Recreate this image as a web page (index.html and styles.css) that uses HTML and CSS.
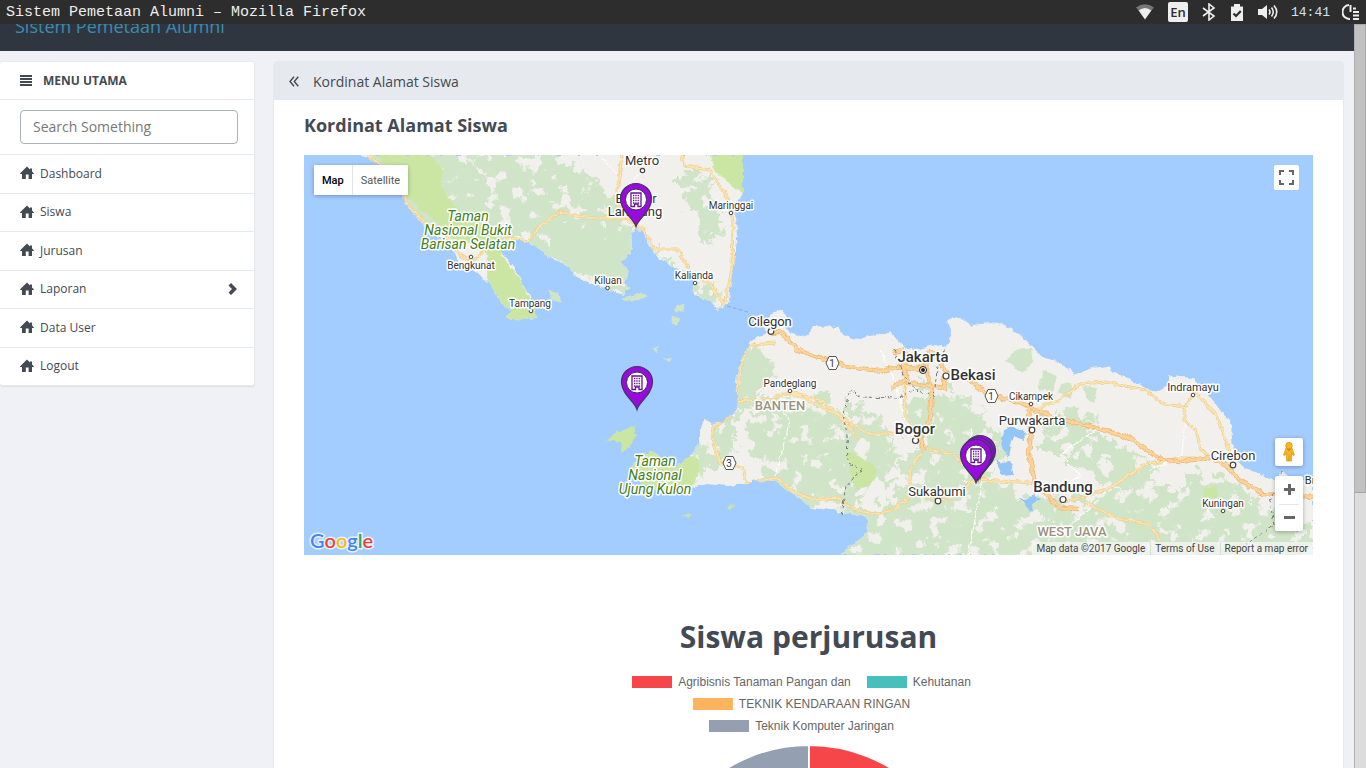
FILE: index.html
```html
<!DOCTYPE html>
<html lang="id">
<head>
<meta charset="utf-8">
<title>Sistem Pemetaan Alumni</title>
<link rel="stylesheet" href="styles.css">
</head>
<body>
<svg class="defs" width="0" height="0" aria-hidden="true">
  <symbol id="home" viewBox="0 0 14 14"><path d="M7 .5 10 3.500V2.500H12V5.500L13.800 7.300V8H12V13H8.600V8.500H5.800V13H2V8H.2V7.300z"/></symbol>
</svg>
<div class="screen">
  <header class="osbar">
    <span class="window-title">Sistem Pemetaan Alumni – Mozilla Firefox</span>
    <div class="tray">
      <div class="indicators">
        <svg width="18" height="16" viewBox="0 0 18 16"><path d="M0 3.500Q9-3 18 3.500L15 7Q9 3 3 7z" fill="#777"/><path d="M2.600 6.500Q9 1.500 15.400 6.500L9 15.500z" fill="#eee"/></svg>
        <span class="lang">En</span>
        <svg width="14" height="18" viewBox="0 0 14 18" fill="none" stroke="#eee" stroke-width="1.600"><path d="M1 5 12 13 7 17V1L12 5 1 13"/></svg>
        <svg width="14" height="17" viewBox="0 0 14 17"><path d="M1 2.500H4V0H10V2.500H13V17H1z" fill="#eee"/><path d="M3.500 9.500 6 12 10.800 7" fill="none" stroke="#2d2d2d" stroke-width="2.200"/></svg>
        <svg width="21" height="16" viewBox="0 0 21 16" fill="none" stroke="#eee" stroke-width="1.600"><path d="M0 5H4L9 1V15L4 11H0z" fill="#eee" stroke="none"/><path d="M11 5.500Q13 8 11 10.500M13.500 3.500Q17 8 13.500 12.500M16 1.500Q21.500 8 16 14.500"/></svg>
      </div>
      <span class="clock">14:41</span>
      <svg width="18" height="16" viewBox="0 0 18 16" fill="none" stroke="#eee" stroke-width="2"><path d="M7 1A7 7 0 0 0 8 15M8.500 1V8M11 4.500H14M11 8H17M11 11.500H17M11 15H17"/></svg>
    </div>
  </header>
  <div class="browser">
    <div class="page">
      <nav class="navbar"><a class="brand" href="#">Sistem Pemetaan Alumni</a></nav>
      <div class="columns">
        <aside class="sidebar">
          <h2 class="menu-title"><svg width="12" height="12" viewBox="0 0 12 12"><path d="M0 0H12V2H0zM0 3H12V5H0zM0 6H12V8H0zM0 9H12V11H0z"/></svg>MENU UTAMA</h2>
          <form class="search"><input type="text" aria-label="Search Something" placeholder="Search Something"></form>
          <ul class="menu">
            <li><a href="#"><svg class="icon"><use href="#home"/></svg>Dashboard</a></li>
            <li><a href="#"><svg class="icon"><use href="#home"/></svg>Siswa</a></li>
            <li><a href="#"><svg class="icon"><use href="#home"/></svg>Jurusan</a></li>
            <li><a href="#"><svg class="icon"><use href="#home"/></svg>Laporan<svg class="caret" viewBox="0 0 9 12"><path d="M3 0 9 6 3 12 .500 9.500 4 6 .500 2.500z"/></svg></a></li>
            <li><a href="#"><svg class="icon"><use href="#home"/></svg>Data User</a></li>
            <li><a href="#"><svg class="icon"><use href="#home"/></svg>Logout</a></li>
          </ul>
        </aside>
        <main class="panel">
          <div class="panel-head">
            <svg width="10" height="11" viewBox="0 0 10 11" fill="none" stroke="#434a54" stroke-width="1.400"><path d="M5 .8 1 5.500 5 10.200M9.300 .8 5.300 5.500 9.300 10.200"/></svg>
            <span>Kordinat Alamat Siswa</span>
          </div>
          <div class="panel-body">
            <h4 class="map-title">Kordinat Alamat Siswa</h4>
            <div class="map">
              <svg class="map-canvas" viewBox="304 155 1009 400" preserveAspectRatio="xMidYMid slice">
                <defs>
                  <filter id="veg" filterUnits="userSpaceOnUse" x="304" y="155" width="1009" height="400">
                    <feTurbulence type="fractalNoise" baseFrequency=".07" numOctaves="5" seed="7" result="n"/>
                    <feColorMatrix in="n" values="0 0 0 0 0 0 0 0 0 0 0 0 0 0 0 16 0 0 0 -5.700" result="holes"/>
                    <feDisplacementMap in="SourceGraphic" in2="n" scale="34" xChannelSelector="R" yChannelSelector="G" result="d"/>
                    <feComposite in="d" in2="holes" operator="in"/>
                  </filter>
                  <filter id="rough" filterUnits="userSpaceOnUse" x="304" y="155" width="1009" height="400">
                    <feTurbulence type="fractalNoise" baseFrequency=".16" numOctaves="3" seed="3"/>
                    <feDisplacementMap in="SourceGraphic" scale="5" xChannelSelector="R" yChannelSelector="G"/>
                  </filter>
                  <clipPath id="land"><path d="M360 155 376 163 390 178 400 190 406 204 420 222 433 234 448 243 460 262 472 268 482 278 490 284 498 297 505 307 511 311 506 317 511 320 537 318 530 297 522 283 513 266 500 250 500 242 520 240 534 245 548 256 560 262 571 268 575 276 590 283 610 290 623 295 630 289 624 283 628 270 619 262 629 254 633 248 631 235 636 230 643 231 648 243 658 257 668 264 681 271 693 281 694 296 712 301 718 311 724 306 729 302 730 290 734 260 737 240 736 212 738 200 743 193V155zM747 350 749 343 757 337 768 333 763 325 772 313 780 310 786 314 788 322 785 326 790 333 800 336 808 335 813 326 838 327 842 335 860 340 867 336 880 335 890 331 897 340 905 347 915 350 935 345 945 348 950 342 951 330 948 321 953 317 960 318 972 325 990 323 1005 325 1018 333 1030 345 1042 358 1058 362 1065 366 1075 375 1092 368 1108 366 1114 372 1130 379 1145 388 1157 391 1170 384 1168 375 1180 377 1193 378 1205 390 1215 403 1225 417 1231 420 1232 440 1236 460 1247 470 1256 472 1274 480 1283 470 1291 480 1313 480V555H841L850 545 860 541 868 530 867 516 850 513 843 514 832 510 812 508 800 498 785 489 775 481 752 480 747 484 728 486 706 484 695 487 670 492 650 488 638 480 631 468 641 455 653 452 665 463 677 467 690 456 700 442 700 427 706 419 711 425 722 422 734 414 738 402 736 382 738 369 743 356z"/></clipPath>
                  <symbol id="pin" viewBox="-18 -46 36 48" overflow="visible">
                    <path d="M0-.5C-2-8-15.500-16-15.500-28A15.500 15.500 0 0 1 15.500-28C15.500-16 2-8 0-.5z" fill="#980bdc" stroke="#41365e" stroke-width="1.200"/>
                    <circle cy="-27.500" r="10.500" fill="#fff" stroke="#3c2d60"/>
                    <path d="M-5-34H5V-20.500H2V-23H-1.500V-20.500H-5z" fill="#fff" stroke="#631391" stroke-width="1.300"/>
                    <path d="M-3-31.500H4M-3-29H4M-3-26.500H4M-3-24H4" stroke="#631391" stroke-width="1.300" stroke-dasharray="1.300 1"/>
                  </symbol>
                </defs>
                <rect x="304" y="155" width="1009" height="400" fill="#a3ccff"/>
                <g filter="url(#rough)">
                <g clip-path="url(#land)">
                  <rect x="304" y="155" width="1009" height="400" fill="#f2f0ed"/>
                  <g fill="#d0e4c8" filter="url(#veg)">
                    <path d="M355 150H560L618 200 636 228 640 300 560 270 528 240 500 245 420 230 405 200zM680 172H712V200L725 230 705 245 695 220 680 190zM560 200 625 210 636 250 632 300 550 260zM650 243 675 262 700 290 690 292zM692 286 715 284 726 305 695 300z"/>
                    <path d="M740 345 765 352 775 375 755 400 710 450 690 490 620 490 640 455 690 455 735 410zM765 395 800 405 830 395 850 430 875 470 850 515 790 495 760 470 745 440zM715 420 735 425 735 450 715 470 690 480zM845 400 880 415 900 455 890 490 860 470zM920 380 960 390 990 420 1010 450 990 480 940 470 925 440 900 430zM905 450 960 450 970 490 930 510 900 490zM840 515 900 495 980 480 1060 500 1120 490 1190 485 1260 500 1313 530V560H830zM1040 410 1075 425 1120 440 1160 465 1150 490 1105 485 1080 460 1045 450zM1190 470 1230 480 1260 500 1230 510 1190 490zM1050 405 1100 415 1080 435z"/>
                  </g>
                  <g fill="#d0e4c8"><path d="M739 360 756 345 767 360 763 382 747 391 738 378zM1005 361 1020 348 1031 348 1034 362 1022 373zM1044 370 1057 376 1052 393 1038 389zM1061 384 1072 382 1071 398 1058 392zM1083 386 1097 388 1094 404 1087 398zM550 225 570 222 600 240 630 240 628 280 605 282 550 256z"/></g>
                  <g fill="#cbe6a3"><path d="M374 155H430L443 170 442 187 458 210 500 235 502 255 522 283 530 300 542 320H505L500 299 487 280 488 256 475 244 452 240 438 222 422 211 402 192 400 176zM711 155H744V195L714 171zM620 450H660L676 466 686 455 698 458 699 472 690 490H630zM846 450 875 465 877 478 868 486 856 489 851 475zM1203 488 1216 486 1218 498 1204 498z"/></g>
                  <g fill="#93c5f8"><path d="M1004 430 1012 427 1024 430 1025 440 1014 437 1010 446 1008 457 1001 445zM996 460 1004 464 1010 460 1014 475 1002 476zM1018 499 1026 500 1033 493 1040 500 1032 504 1033 514 1026 504z"/></g>
                  <g fill="none" stroke="#fff" stroke-width="1"><path d="M770 395 790 420 782 450 775 480M970 430 982 480 975 520 968 555M1095 430 1060 455 1080 475 1060 490M1185 420 1182 455 1150 470M880 350 895 380 905 420M600 155 622 180M650 166 632 180M1100 500 1070 525"/></g>
                  <g fill="none" stroke="#f0cf8b" stroke-width="3"><path id="minor" d="M365 153 382 167 404 190 407 204 422 220 446 236 459 254 472 263M472 263 482 252 510 238 528 241 540 226 560 212 590 218 625 218 643 230 655 249 678 249 692 274 711 285 724 305 732 270 733 220 726 195 709 170 684 166 682 155M622 155 616 200 627 218M747 350 740 369 737 390 738 402 730 417 712 427 715 447 720 463 742 466 747 483 777 478 793 492 815 500 838 498 855 510 878 515 897 507 912 495 947 500 976 480 1020 482 1045 485M738 401 770 399 791 392 820 400 839 415 860 440M790 392 832 412 870 435 896 433M904 365 905 415 917 438 930 450 952 453 970 470 986 478M922 451 910 470 910 495M737 350 752 345 776 343M1038 408 1059 400 1080 384 1105 382 1145 390 1164 404 1185 407 1195 392M1184 407 1184 420 1196 430 1201 450 1214 460M1195 392 1216 415 1232 458M1065 502 1106 490 1145 465 1180 458 1195 458M1085 503 1120 519 1150 525 1160 540"/></g>
                  <g fill="none" stroke="#fae5b4" stroke-width="1.500"><use href="#minor"/></g>
                  <g fill="none" stroke="#eebc76" stroke-width="4.500"><path id="major" d="M771 334 780 331 798 350 818 357 850 367 880 371 902 367 920 369 930 352 938 356 945 372 970 381 990 395 1020 402 1035 410 1060 419 1100 429 1130 438 1158 458 1180 462 1210 457 1225 465 1240 480 1263 494 1313 497M893 352 903 350 908 358 902 367 909 383 944 388 945 372M891 388 908 378M928 352 927 372 932 390 930 420 920 440 924 451M1029 410 1031 430 1029 455 1035 483 1047 494 1060 508 1080 509"/></g>
                  <g fill="none" stroke="#fcd39c" stroke-width="2.700"><use href="#major"/></g>
                  <g fill="none" stroke="#777" stroke-width="1" stroke-dasharray="3 3"><path d="M845 500 842 515M841 514 846 487 857 474 864 470 848 463 847 435 843 414 848 397 850 389 860 397 898 398 915 389 934 397 937 370 946 345M894 349 903 375 918 392"/><path d="M1284 465 1278 485 1270 501 1274 525 1245 545"/></g>
                </g>
                <g fill="#cbe6a3"><path d="M606 440 617 432 634 427 636 435 630 448 622 453 620 443zM682 515 692 513 689 517zM726 507 735 504 730 510z"/><g fill="#d0e4c8"><path d="M548 288 560 295 561 303 552 300zM620 299 638 293 648 295 640 300 626 301zM676 305 686 304 683 311 675 313zM672 317 680 318 678 325 671 324zM652 349 659 346 656 352zM663 358 671 357 669 362z"/></g></g>
                </g>
                <path d="M727 306 748 312" stroke="#8ba9db" stroke-dasharray="4 2"/>
                <g fill="#fff" stroke="#444" stroke-width="1.200"><circle cx="771" cy="331.500" r="2.800"/><circle cx="946" cy="376" r="3"/><circle cx="915.500" cy="440.500" r="3"/><circle cx="938" cy="501" r="2.800"/><circle cx="1063" cy="499.500" r="3"/><circle cx="1032" cy="430" r="2.800"/><circle cx="1233" cy="465" r="2.800"/><circle cx="642.500" cy="170.500" r="2.200"/><g stroke-width="1"><circle cx="471" cy="257" r="1.800"/><circle cx="531" cy="311" r="1.800"/><circle cx="607.500" cy="288" r="1.800"/><circle cx="695" cy="283" r="1.800"/><circle cx="731" cy="213" r="1.800"/><circle cx="790" cy="391" r="1.800"/><circle cx="1031" cy="404" r="1.800"/><circle cx="1193" cy="395" r="1.800"/><circle cx="1223" cy="511" r="1.800"/></g></g>
                <circle cx="923" cy="370" r="3.500" fill="#fff" stroke="#222"/><circle cx="923" cy="370" r="2" fill="#222"/>
                <g class="shield"><path d="M826 363 829 356.500H836L839 363 836 369.500H829z"/><path d="M985 396 988 389.500H995L998 396 995 402.500H988z"/><path d="M723 463 726 456.500H733L736 463 733 469.500H726z"/></g>
                <g class="place tiny"><text x="832" y="367">1</text><text x="991" y="400">1</text><text x="729" y="467">3</text></g>
                <g class="place park"><text x="468" y="221">Taman</text><text x="468" y="235">Nasional Bukit</text><text x="468" y="249">Barisan Selatan</text><text x="655" y="466">Taman</text><text x="655" y="480">Nasional</text><text x="655" y="494">Ujung Kulon</text></g>
                <g class="place tiny"><text x="471" y="269">Bengkunat</text><text x="530" y="307">Tampang</text><text x="608" y="284">Kiluan</text><text x="694" y="279">Kalianda</text><text x="731" y="209">Maringgai</text><text x="790" y="387">Pandeglang</text><text x="1031" y="400">Cikampek</text><text x="1223" y="507">Kuningan</text></g>
                <g class="place village"><text x="1193" y="391">Indramayu</text><text x="1313" y="484">Bre</text></g>
                <g class="place town"><text x="642" y="165">Metro</text><text x="636" y="203">Bandar</text><text x="635" y="216">Lampung</text><text x="770" y="326">Cilegon</text><text x="1032" y="425">Purwakarta</text><text x="937" y="496">Sukabumi</text><text x="1233" y="460">Cirebon</text></g>
                <g class="place city"><text x="923" y="362">Jakarta</text><text x="973" y="380">Bekasi</text><text x="915" y="434">Bogor</text><text x="1063" y="492">Bandung</text></g>
                <g class="place region"><text x="780" y="410">BANTEN</text><text x="1072" y="536">WEST JAVA</text></g>
                <use href="#pin" x="618" y="181" width="36" height="48"/>
                <use href="#pin" x="619" y="364" width="36" height="48"/>
                <use href="#pin" x="962" y="433" width="36" height="48"/>
                <use href="#pin" x="960" y="435" width="36" height="48"/>
                <use href="#pin" x="958" y="437" width="36" height="48"/>
                <text class="google" x="310" y="548"><tspan fill="#4285f4">G</tspan><tspan fill="#ea4335">o</tspan><tspan fill="#fbbc05">o</tspan><tspan fill="#4285f4">g</tspan><tspan fill="#34a853">l</tspan><tspan fill="#ea4335">e</tspan></text>
              </svg>
              <div class="map-types"><button class="active" type="button">Map</button><button type="button">Satellite</button></div>
              <button class="fullscreen" type="button" aria-label="Fullscreen"><svg width="15" height="15" viewBox="0 0 15 15" fill="none" stroke="#666" stroke-width="2"><path d="M1 5V1H5M10 1H14V5M14 10V14H10M5 14H1V10"/></svg></button>
              <div class="map-tools">
                <button class="pegman" type="button" aria-label="Street View"><svg width="14" height="20" viewBox="0 0 14 20" fill="#fbb51c" stroke="#c98b12" stroke-width=".6"><path d="M4 6H10L12.500 13 11 13.500 9.500 10.500V19H4.500V10.500L3 13.500 1.500 13z"/><circle cx="7" cy="3.600" r="3.300"/><path d="M5 7 7 9 9 7" fill="#e77b16"/><path d="M7 13V19"/></svg></button>
                <div class="zoom"><button type="button" aria-label="Zoom in"><svg width="11" height="11" viewBox="0 0 11 11"><path d="M4 0H7V4H11V7H7V11H4V7H0V4H4z"/></svg></button><button type="button" aria-label="Zoom out"><svg width="11" height="3" viewBox="0 0 11 3"><path d="M0 0H11V3H0z"/></svg></button></div>
              </div>
              <div class="credits"><span>Map data ©2017 Google</span><a href="#">Terms of Use</a><a href="#">Report a map error</a></div>
            </div>
            <section class="chart">
              <h1>Siswa perjurusan</h1>
              <ul class="legend">
                <li><i class="red"></i>Agribisnis Tanaman Pangan dan</li>
                <li><i class="teal"></i>Kehutanan</li>
                <li><i class="orange"></i>TEKNIK KENDARAAN RINGAN</li>
                <li><i class="gray"></i>Teknik Komputer Jaringan</li>
              </ul>
              <svg class="pie" width="314" height="314" viewBox="0 0 314 314" stroke="#fff" stroke-width="2"><path d="M157 0A157 157 0 0 1 157 314z" fill="#f7464a"/><path d="M157 0A157 157 0 0 0 157 314z" fill="#949fb1"/></svg>
            </section>
          </div>
        </main>
      </div>
    </div>
    <div class="scrollbar"><div class="thumb"></div></div>
  </div>
</div>
</body>
</html>
```
FILE: styles.css
```css
* { box-sizing: border-box; }
body { margin: 0; font-family: "Open Sans", sans-serif; font-size: 13px; color: #434a54; }
a { color: inherit; text-decoration: none; }
button { border: 0; padding: 0; background: #fff; font-family: Roboto, sans-serif; display: flex; align-items: center; justify-content: center; }
ul { list-style: none; margin: 0; padding: 0; }
.defs { position: absolute; }
.screen { height: 100vh; display: flex; flex-direction: column; overflow: hidden; }

.osbar { flex: none; height: 24px; background: #2d2d2d; color: #eee; display: flex; align-items: center; justify-content: space-between; padding: 0 6px; font-family: "Liberation Mono", monospace; }
.window-title { font-size: 15px; }
.tray { display: flex; align-items: center; gap: 12px; }
.indicators { display: flex; align-items: center; gap: 14px; }
.lang { background: #eee; color: #2d2d2d; border-radius: 2px; width: 20px; height: 20px; font: 600 13px/20px "Open Sans", sans-serif; text-align: center; }
.clock { font-size: 13px; color: #cfe2fb; }

.browser { flex: 1; min-height: 0; display: flex; }
.page { flex: 1; min-width: 0; overflow: hidden; background: #f0f1f6; }
.scrollbar { width: 12px; background: #dcdcdc; border-left: 1px solid #b0b0b0; }
.thumb { height: 63%; background: #c1c1c1; border: 1px solid #a8a8a8; border-left: 0; }

.navbar { height: 27px; background: #2f3640; display: flex; align-items: flex-end; padding: 0 15px 13px; overflow: hidden; }
.brand { font-size: 18px; line-height: 24px; color: #3a8caf; }

.columns { display: grid; grid-template-columns: 255px 1fr; gap: 18px; align-items: start; padding: 10px 10px 0 0; }
.sidebar { background: #fff; border: 1px solid #e6e9ee; border-left: 0; border-radius: 3px; box-shadow: 0 1px 1px rgba(0, 0, 0, .08); }
.menu-title { margin: 0; height: 38px; padding-left: 20px; display: flex; align-items: center; gap: 11px; font-size: 12px; font-weight: 700; border-bottom: 1px solid #e6e9ee; fill: #434a54; }
.search { padding: 10px 16px 10px 20px; }
.search input { display: block; width: 100%; height: 34px; padding: 0 12px 2px; border: 1px solid #aab2bd; border-radius: 4px; font: 14px "Open Sans", sans-serif; }
.search input::placeholder { color: #777; }
.menu { height: 231px; display: grid; grid-auto-rows: 1fr; }
.menu li { border-top: 1px solid #e6e9ee; }
.menu a { height: 100%; display: flex; align-items: center; padding: 0 17px 1px 20px; font-size: 12px; }
.icon { width: 14px; height: 14px; margin-right: 6px; fill: #434a54; }
.caret { width: 9px; height: 12px; margin-left: auto; fill: #434a54; }

.panel { min-width: 0; background: #fff; border: 1px solid #e6e9ee; border-radius: 4px; }
.panel-head { height: 38px; background: #e6e9ee; padding: 0 15px; display: flex; align-items: center; gap: 14px; font-size: 14px; }
.panel-body { padding: 12px 30px 0; }
.map-title { margin: 0 0 17px; font-size: 18px; line-height: 26px; font-weight: 700; }

.map { position: relative; height: 400px; overflow: hidden; font-family: Roboto, sans-serif; }
.map-canvas { display: block; width: 100%; height: 100%; }
.place { text-anchor: middle; stroke: #fff; stroke-width: 3px; stroke-linejoin: round; paint-order: stroke; fill: #333; font-family: Roboto, sans-serif; }
.tiny { font-size: 10px; }
.village { font-size: 11px; }
.town { font-size: 13px; }
.city { font-size: 15px; font-weight: 500; }
.park { font-size: 14px; font-style: italic; fill: #3f8018; }
.region { font-size: 13px; font-weight: 500; fill: #9b9181; }
.shield { fill: #fff; stroke: #555; }
.google { font: 600 20px Lato, sans-serif; stroke: #e8f1ff; stroke-width: 3px; paint-order: stroke; }
.map-types { position: absolute; left: 10px; top: 10px; display: flex; border-radius: 2px; box-shadow: 0 1px 4px rgba(0, 0, 0, .3); }
.map-types button { height: 30px; padding: 0 8px; font-size: 11px; color: #565656; }
.map-types .active { font-weight: 500; color: #000; border-right: 1px solid #e2e2e2; }
.fullscreen { position: absolute; right: 14px; top: 10px; width: 25px; height: 25px; border-radius: 2px; }
.map-tools { position: absolute; right: 10px; bottom: 24px; width: 28px; display: grid; gap: 10px; }
.pegman, .zoom { height: 28px; border-radius: 2px; box-shadow: 0 1px 4px rgba(0, 0, 0, .3); }
.zoom { height: 55px; background: #fff; padding: 0 4px; display: grid; grid-template-rows: 1fr 1fr; fill: #666; }
.zoom button + button { border-top: 1px solid #e6e6e6; }
.credits { position: absolute; right: 0; bottom: 0; display: flex; font-size: 10px; line-height: 12px; color: #444; background: rgba(245, 245, 245, .75); }
.credits > * { padding: 1px 5px 0 4px; }
.credits a { border-left: 1px solid #d8ddd5; }

.chart { padding-top: 61px; display: flex; flex-direction: column; align-items: center; }
.chart h1 { margin: 0 0 13px; font-size: 30px; line-height: 42px; font-weight: 700; }
.legend { width: 400px; padding-right: 14px; display: flex; flex-wrap: wrap; justify-content: center; column-gap: 16px; font: 12px/22px "Liberation Sans", sans-serif; color: #666; }
.legend li { display: flex; align-items: center; gap: 6px; }
.legend i { width: 40px; height: 12px; }
.red { background: #f7464a; }
.teal { background: #46bfbd; }
.orange { background: #fdb45c; }
.gray { background: #949fb1; }
.pie { margin-top: 8px; }
```
